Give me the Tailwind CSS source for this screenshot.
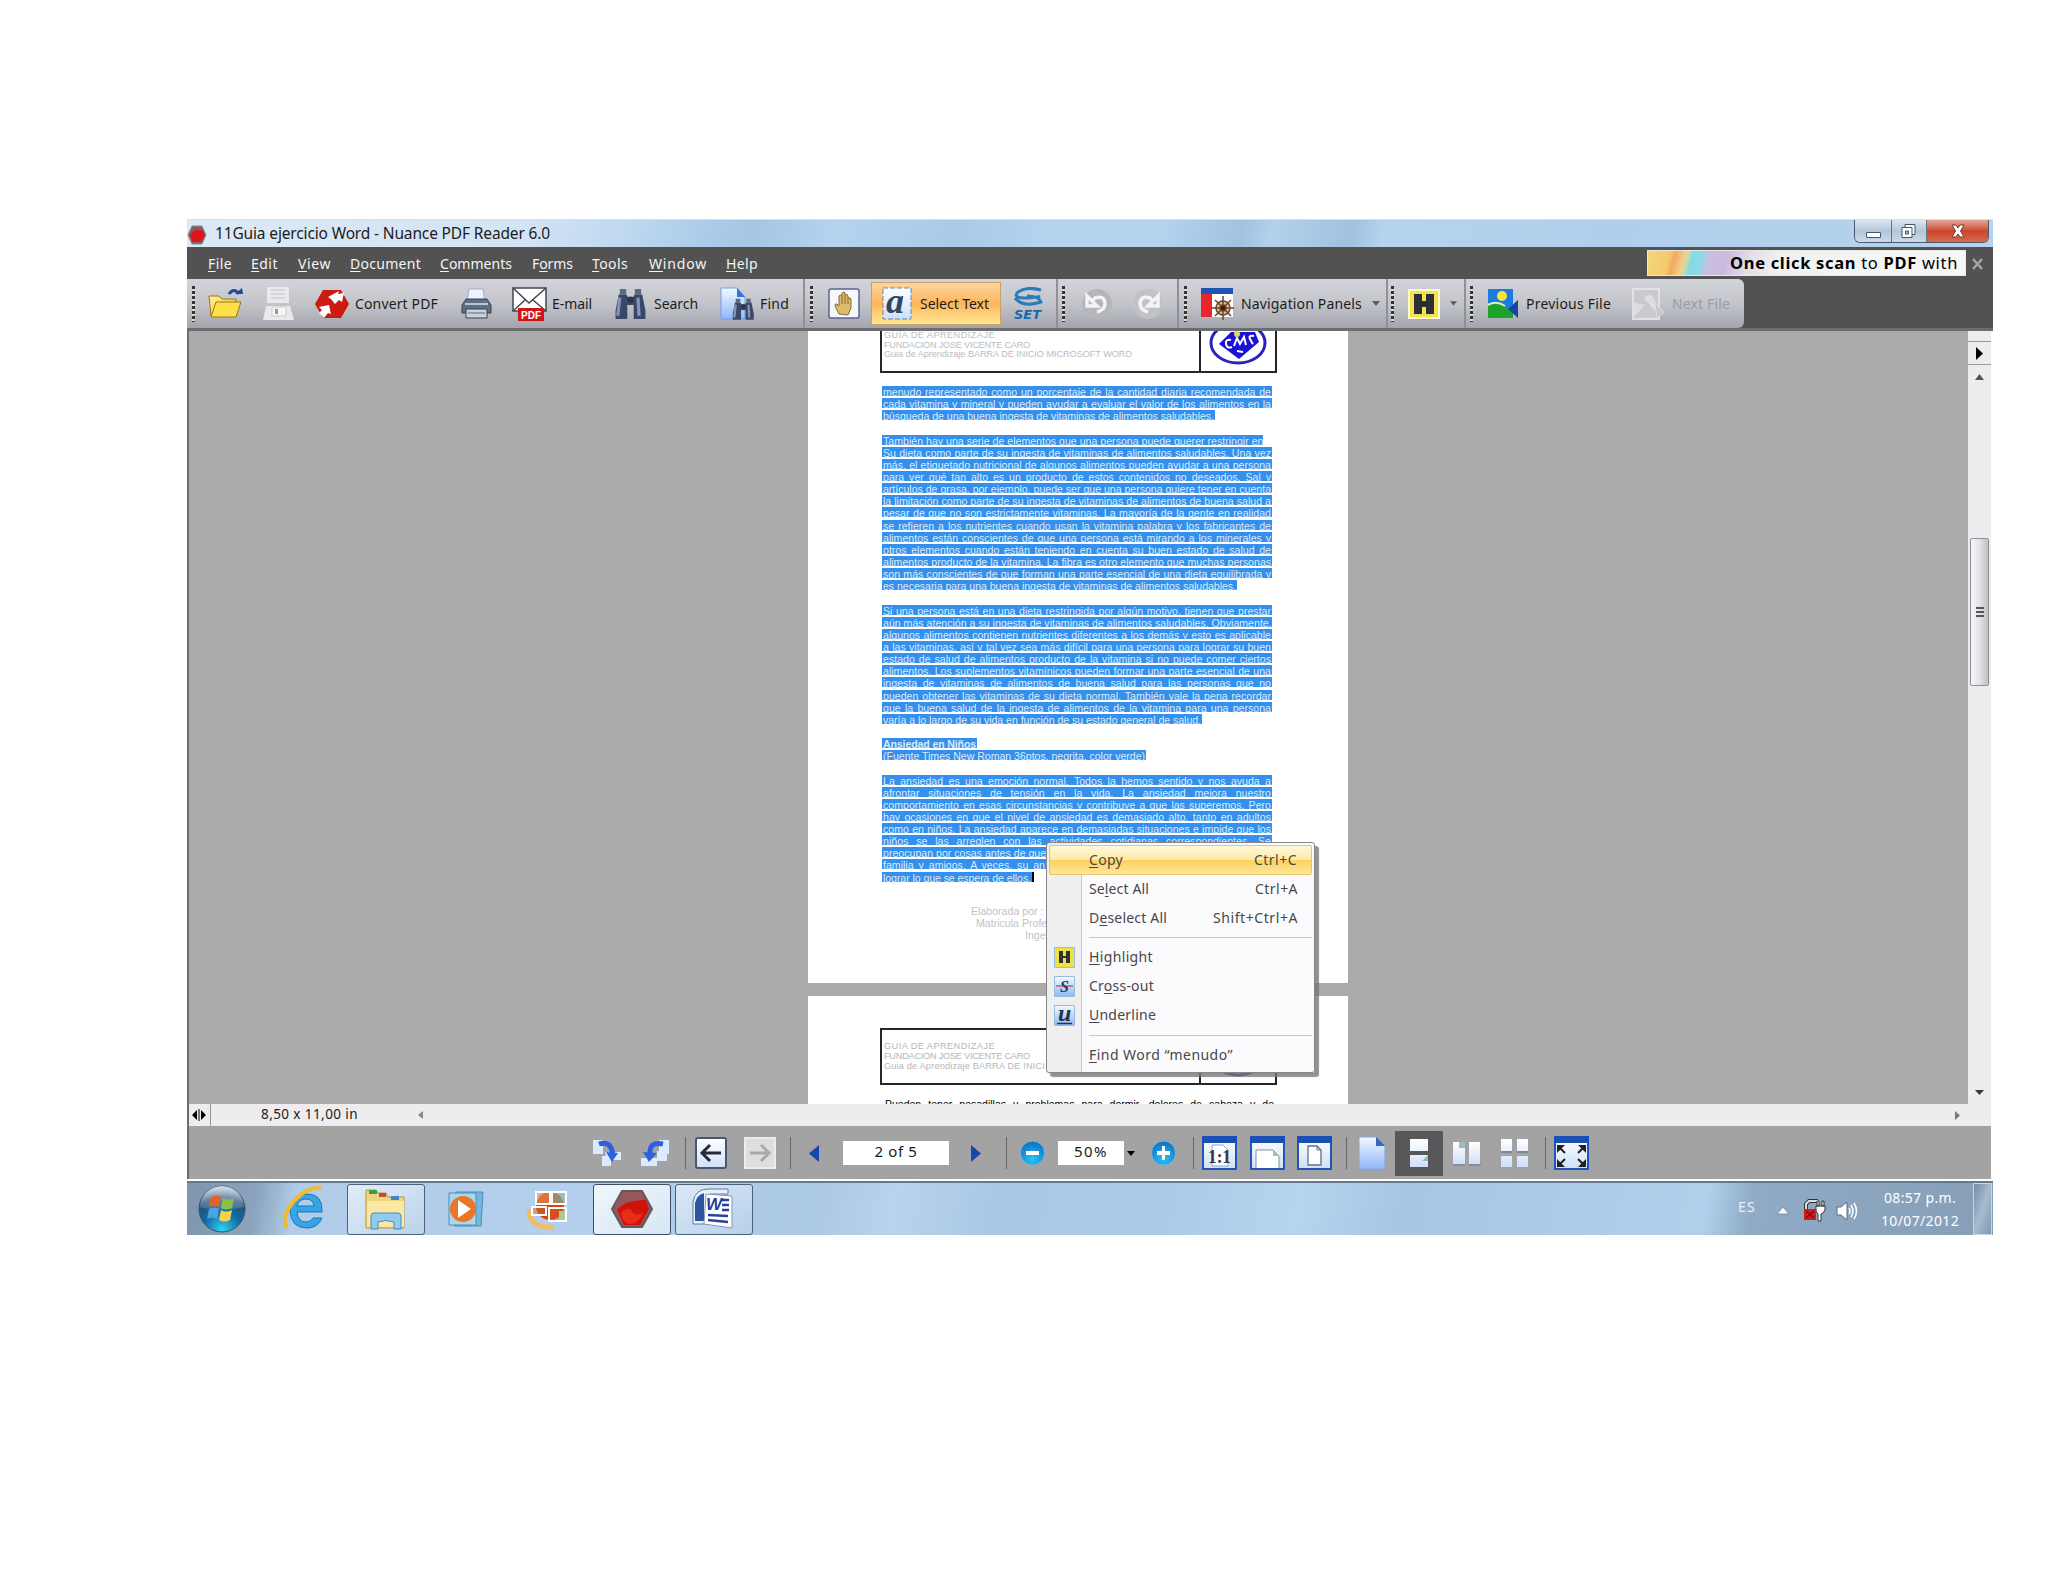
<!DOCTYPE html>
<html lang="es">
<head>
<meta charset="utf-8">
<title>11Guia ejercicio Word - Nuance PDF Reader 6.0</title>
<script src="https://cdn.jsdelivr.net/npm/@tailwindcss/browser@4"></script>
</head>
<body class="h-[1582px] w-[2048px] overflow-hidden bg-white pl-[187px] pt-[219px] font-['Noto_Sans','Open_Sans',sans-serif] text-[15px] text-[#1c1c20]">
<svg width="0" height="0" class="absolute">
  <defs>
    <linearGradient id="blue" x1="0" y1="0" x2="0" y2="1"><stop offset="0" stop-color="#f4f9ff"/><stop offset="1" stop-color="#8fb8f8"/></linearGradient>
    <linearGradient id="pane" x1="0" y1="0" x2="0" y2="1"><stop offset="0" stop-color="#ffffff"/><stop offset="1" stop-color="#cfe0f8"/></linearGradient>
    <radialGradient id="ball" cx=".5" cy=".75" r=".65"><stop offset="0" stop-color="#27c4f8"/><stop offset="1" stop-color="#1478c4"/></radialGradient>
    <linearGradient id="fold" x1="0" y1="0" x2="1" y2="1"><stop offset="0" stop-color="#fff3a0"/><stop offset="1" stop-color="#f0b90e"/></linearGradient>
    <radialGradient id="orb" cx=".5" cy=".95" r=".9"><stop offset="0" stop-color="#2fd4f4"/><stop offset=".45" stop-color="#0f6ba4"/><stop offset=".8" stop-color="#285070"/><stop offset="1" stop-color="#93b0c8"/></radialGradient>
    <linearGradient id="orbtop" x1="0" y1="0" x2="0" y2="1"><stop offset="0" stop-color="#dfe9f2" stop-opacity=".8"/><stop offset="1" stop-color="#7f9db8" stop-opacity=".3"/></linearGradient>
    <g id="bino"><path d="M5 1h6v5H5zM19 1h6v5h-6z" fill="#5a6a88"/><path d="M4 6h7l3 4h2l3-4h7l3 15v8H18V16h-6v13H1v-8z" fill="#3a4868"/><path d="M5 9l-2 17M22 9l1 17" stroke="#8795b4" stroke-width="3" fill="none"/><circle cx="15" cy="11" r="3" fill="#2a3450"/></g>
  </defs>
</svg>

<main class="flex h-[1016px] w-[1806px] flex-col">
  <!-- title bar -->
  <header class="flex h-[28px] shrink-0 border-t border-[#d5e3ef] bg-[linear-gradient(100deg,#dce9f6_0px,#d3e4f5_330px,#bfd9f0_430px,#a9cbe9_520px,#a5c7e3_560px,#b3d3ef_640px,#a9cbe7_760px,#b3d3ef_850px,#b3d3ef_960px,#a1c3df_1040px,#b1d1ec_1070px,#a1c2de_1150px,#b3d3ee_1180px,#b0cfec_1400px,#b7d3ec_1806px)]">
    <svg class="mt-[5px] shrink-0" width="20" height="20" viewBox="0 0 20 20"><path d="M5 1h10l4 9-4 9H5l-4-9z" fill="#7c6264" stroke="#8a8a90"/><path d="M4 8q6-6 12-2l2 4-4 7H6l-3-6z" fill="#e0141a"/></svg>
    <span class="ml-[8px] w-[335px] whitespace-nowrap text-[15.500px] leading-[27px]" data-fit="335">11Guia ejercicio Word - Nuance PDF Reader 6.0</span>
    <div class="ml-auto mr-1 flex h-[23px] overflow-hidden rounded-b-md border border-t-0 border-[#4c5a6c]">
      <div class="flex w-[37px] items-center justify-center border-r border-[#65758a] bg-linear-to-b from-[#dce7f1] via-[#b3c5d8] to-[#c8dbec]"><i class="mt-[7px] h-[6px] w-[15px] rounded-[1px] border border-[#44546a] bg-white"></i></div>
      <div class="flex w-[35px] items-center justify-center border-r border-[#65758a] bg-linear-to-b from-[#dce7f1] via-[#b3c5d8] to-[#c8dbec]"><svg class="mr-[2px]" width="17" height="17" viewBox="0 0 17 17" fill="#fff" stroke="#44546a"><path d="M5 1.500h10v10H5z"/><path d="M2 4.500h10v10H2z"/><path d="M5.500 8h3v3h-3z" fill="#a9bace"/></svg></div>
      <div class="flex w-[61px] items-center justify-center bg-linear-to-b from-[#e2a79b] via-[#c9452c] to-[#d9694a]"><svg width="16" height="14" viewBox="0 0 16 14"><path d="M2 1h4l2 3 2-3h4l-3.500 6 3.500 6h-4l-2-3-2 3H2l3.500-6z" fill="#fff" stroke="#6a3a38"/></svg></div>
    </div>
  </header>

  <!-- menu bar -->
  <nav class="flex h-[32px] shrink-0 items-center bg-[#525253] pl-[21px] text-[14px] text-[#f4f4f4] [&>span]:shrink-0 [&>span]:whitespace-nowrap [&_u]:underline-offset-2">
    <span class="mr-[19px] w-[24px]" data-fit="24"><u>F</u>ile</span>
    <span class="mr-[20px] w-[27px]" data-fit="27"><u>E</u>dit</span>
    <span class="mr-[19px] w-[33px]" data-fit="33"><u>V</u>iew</span>
    <span class="mr-[19px] w-[71px]" data-fit="71"><u>D</u>ocument</span>
    <span class="mr-[20px] w-[72px]" data-fit="72"><u>C</u>omments</span>
    <span class="mr-[19px] w-[41px]" data-fit="41">F<u>o</u>rms</span>
    <span class="mr-[21px] w-[36px]" data-fit="36"><u>T</u>ools</span>
    <span class="mr-[19px] w-[58px]" data-fit="58"><u>W</u>indow</span>
    <span class="w-[32px]" data-fit="32"><u>H</u>elp</span>
    <div class="ml-auto flex h-[26px] w-[319px] items-center justify-end border border-[#e8e8e8] bg-[linear-gradient(105deg,#f3d77a_0px,#f5c96c_22px,#f3a860_27px,#f0d08a_36px,#c8d8b0_41px,#7edce8_44px,#8fd9e8_54px,#c9c0de_60px,#cdb9e0_78px,#e4dde8_100px,#f1f1f1_130px,#f7f7f7_319px)] pr-[7px] text-black">
      <span class="w-[228px] whitespace-nowrap text-[16.500px] leading-[24px]" data-fit="228"><b>One click scan</b> to <b>PDF</b> with</span>
    </div>
    <svg class="ml-[5px] mr-[9px] shrink-0" width="13" height="13" viewBox="0 0 13 13"><path d="M2 2l9 10M11 2L2 12" stroke="#a4a4a4" stroke-width="2.600"/></svg>
  </nav>

  <!-- toolbar -->
  <div class="flex h-[52px] shrink-0 border-b-[3px] border-[#6c6d70] bg-[#525253]">
    <div class="flex h-[49px] w-[1557px] items-center rounded-r-md bg-linear-to-b from-[#d3d4d9] via-[#c4c5cb] to-[#a3a5ae] text-[14px] [&>*]:shrink-0 [&>span]:whitespace-nowrap">
      <i class="ml-[5px] mr-[13px] h-[36px] w-[3px] bg-[repeating-linear-gradient(to_bottom,#333_0_3px,#ddd_3px_5px)]"></i>
      <svg class="mr-[20px]" width="35" height="31" viewBox="0 0 35 31"><path d="M1 8h10l3 3h14v17H3z" fill="url(#fold)" stroke="#9c7612"/><path d="M8 14h25l-5 15H3z" fill="#ffe04a" stroke="#9c7612"/><path d="M21 6q5-7 10 0" fill="none" stroke="#1b4c94" stroke-width="3"/><path d="M27 6h8l-1-6z" fill="#1b4c94"/></svg>
      <svg class="mr-[20px]" width="32" height="35" viewBox="0 0 32 35"><path d="M4 1h22v16H4zM3 20h24l4 14H0z" fill="#e9e9eb"/><path d="M8 4h14M8 8h14M8 12h14" stroke="#d6d6da" stroke-width="2"/><path d="M9 21h14v9H9z" fill="#f6f6f6" stroke="#cdcdd2"/><path d="M12 23h3v5h-3z" fill="#999"/></svg>
      <svg class="mr-[5px]" width="35" height="30" viewBox="0 0 35 30"><path d="M8 1h18l8 14-8 14H8L0 15z" fill="#cc1b10"/><path d="M13 8l11-6-1 3 6-1-2 9-3-2-4 4-4-5z" fill="#fff"/><path d="M4 18l10-2 2 9-3-1-4 5-5-5 3-3z" fill="#fff"/></svg>
      <span class="mr-[23px] w-[83px]" data-fit="83">Convert PDF</span>
      <svg class="mr-[20px]" width="31" height="32" viewBox="0 0 31 32"><path d="M8 1h14l2 13H6z" fill="#eef4ff" stroke="#9db1cf"/><path d="M5 11h21l4 6v8H1v-8z" fill="#5e6f82" stroke="#36434f"/><path d="M4 16h23" stroke="#b9c6d2" stroke-width="2"/><path d="M5 21h21v9H5z" fill="#c8d2dc" stroke="#36434f"/><path d="M7 25h17" stroke="#667" /></svg>
      <svg class="mr-[5px]" width="35" height="36" viewBox="0 0 35 36"><path d="M1 2h33v23H1z" fill="#fff" stroke="#45474d" stroke-width="1.500"/><path d="M1 2l16 15L34 2M1 25l12-11M34 25L21 14" fill="none" stroke="#45474d" stroke-width="1.500"/><path d="M6 22h26v13H6z" fill="#d0141a"/><text x="9" y="33" font-size="11.500" font-weight="700" fill="#fff" font-family="Liberation Sans" textLength="20" lengthAdjust="spacingAndGlyphs">PDF</text></svg>
      <span class="mr-[22px] w-[40px]" data-fit="40">E-mail</span>
      <svg class="mr-[7px]" width="33" height="32" viewBox="0 0 30 30"><use href="#bino"/></svg>
      <span class="mr-[22px] w-[44px]" data-fit="44">Search</span>
      <svg class="mr-[5px]" width="35" height="34" viewBox="0 0 35 34"><path d="M1 1h16l8 9v22H1z" fill="url(#blue)" stroke="#6f9de8"/><path d="M17 1v9h8z" fill="#3373e0"/><g transform="translate(12 11) scale(.75)"><use href="#bino"/></g></svg>
      <span class="mr-[13px] w-[30px]" data-fit="29">Find</span>
      <i class="h-[49px] w-[2px] bg-[#8f9097]"></i>
      <i class="ml-[5px] mr-[15px] h-[36px] w-[3px] bg-[repeating-linear-gradient(to_bottom,#333_0_3px,#ddd_3px_5px)]"></i>
      <svg class="mr-[11px]" width="32" height="31" viewBox="0 0 32 31"><rect x="1" y="1" width="30" height="29" rx="2" fill="#f7f8fc" stroke="#56648f" stroke-width="1.500"/><path d="M11 26l-4-8q0-3 2-2l2 2V8q1-2 3 0V5q2-2 3 0v2q2-2 3 1v2q3-1 3 2v8l-3 7z" fill="#dcbc6c" stroke="#856a2e"/><path d="M14 8v8M17 7v9M20 9v7" stroke="#856a2e"/></svg>
      <div class="flex h-[43px] w-[130px] items-center border border-[#c9a25e] bg-linear-to-b from-[#fbd5a0] via-[#fdb65a] to-[#fee893] pl-[10px]">
        <svg class="mr-[8px] shrink-0" width="30" height="33" viewBox="0 0 30 33"><rect x="1" y="1" width="28" height="31" fill="url(#pane)" stroke="#6787ae" stroke-dasharray="5 2"/><text x="4" y="26" font-size="36" font-style="italic" font-weight="700" font-family="Liberation Serif" fill="#2b4a66">a</text></svg>
        <span class="w-[69px] whitespace-nowrap" data-fit="69">Select Text</span>
      </div>
      <svg class="ml-[11px] mr-[13px]" width="31" height="33" viewBox="0 0 31 33"><path d="M29 3Q15-1 6 5q-6 6 8 6 10 0 14-2M3 11q8 10 26 4-2-6-14-6" fill="none" stroke="#2a7cb8" stroke-width="3"/><text x="2" y="32" font-size="13" font-weight="700" font-style="italic" font-family="DejaVu Sans" fill="#1668ac" textLength="27" lengthAdjust="spacingAndGlyphs">SET</text></svg>
      <i class="h-[49px] w-[2px] bg-[#8f9097]"></i>
      <i class="ml-[4px] mr-[16px] h-[36px] w-[3px] bg-[repeating-linear-gradient(to_bottom,#333_0_3px,#ddd_3px_5px)]"></i>
      <svg class="mr-[19px]" width="32" height="32" viewBox="0 0 32 32"><circle cx="16" cy="16" r="15" fill="#b5b6ba"/><path d="M6 8v10h10zM10 14l4-4q9-3 10 5 0 7-8 9" fill="none" stroke="#f4f4f5" stroke-width="3.500"/></svg>
      <svg class="mr-[13px]" width="32" height="32" viewBox="0 0 32 32"><circle cx="16" cy="16" r="15" fill="#c1c2c5"/><path d="M26 8v10H16zM22 14l-4-4q-9-3-10 5 0 7 8 9" fill="none" stroke="#f4f4f5" stroke-width="3.500"/></svg>
      <i class="h-[49px] w-[2px] bg-[#8f9097]"></i>
      <i class="ml-[5px] mr-[14px] h-[36px] w-[3px] bg-[repeating-linear-gradient(to_bottom,#333_0_3px,#ddd_3px_5px)]"></i>
      <svg class="mr-[7px]" width="33" height="33" viewBox="0 0 33 33"><path d="M0 1h32v29H0z" fill="#fff"/><path d="M0 1h32v6H0z" fill="#1d55b4"/><path d="M0 7h11v23H0z" fill="#e8262a"/><g stroke="#6a4528" stroke-width="1.500" fill="#e5bc94"><circle cx="22" cy="21" r="7"/><path d="M22 9v24M10 21h23M14 13l16 16M30 13L14 29"/><circle cx="22" cy="21" r="3" fill="#351c10"/></g></svg>
      <span class="mr-[10px] w-[121px]" data-fit="121">Navigation Panels</span>
      <svg class="mr-[6px]" width="8" height="5" viewBox="0 0 8 5"><path d="M0 0h8L4 5z" fill="#5a5c62"/></svg>
      <i class="h-[49px] w-[2px] bg-[#8f9097]"></i>
      <i class="ml-[3px] mr-[14px] h-[36px] w-[3px] bg-[repeating-linear-gradient(to_bottom,#333_0_3px,#ddd_3px_5px)]"></i>
      <svg class="mr-[10px]" width="32" height="30" viewBox="0 0 32 30"><rect x="1" y="1" width="30" height="28" fill="#f1e44e" stroke="#fbfbd0" stroke-width="2"/><path d="M6 5h8v7h4V5h8v20h-8v-7h-4v7H6z" fill="#2e2f36"/></svg>
      <svg class="mr-[7px]" width="7" height="5" viewBox="0 0 8 5"><path d="M0 0h8L4 5z" fill="#5a5c62"/></svg>
      <i class="h-[49px] w-[2px] bg-[#8f9097]"></i>
      <i class="ml-[4px] mr-[15px] h-[36px] w-[3px] bg-[repeating-linear-gradient(to_bottom,#333_0_3px,#ddd_3px_5px)]"></i>
      <svg class="mr-[8px]" width="30" height="31" viewBox="0 0 30 31"><path d="M0 1h25v29H0z" fill="#1b7ce0"/><circle cx="14" cy="8" r="5" fill="#ffe23c"/><path d="M0 17q10-6 25 8v5H0z" fill="#1ca32c"/><path d="M0 17q8-5 17 1" fill="none" stroke="#d5f3c8" stroke-width="2"/><path d="M30 12v18L20 21z" fill="#15469c"/></svg>
      <span class="mr-[21px] w-[85px]" data-fit="85">Previous File</span>
      <svg class="mr-[7px]" width="33" height="32" viewBox="0 0 33 32"><path d="M1 1h26v30H1z" fill="#c9cace" stroke="#e2e2e5" stroke-width="2"/><path d="M1 14l12 3-12 13M12 10q6-8 11 3v10z" fill="#dedee1"/><path d="M23 15l9 9-7 7z" fill="#c9cace" stroke="#dcdcdf"/></svg>
      <span class="w-[58px] text-[#9a9ba3]" data-fit="58">Next File</span>
    </div>
  </div>

  <!-- document viewport -->
  <section class="flex h-[773px] w-[1804px] shrink-0 border-l-2 border-[#6d6d70] bg-[#aba9ab]">
    <div class="relative h-[773px] w-[1779px] overflow-hidden pl-[619px] font-['Liberation_Sans',Arial,sans-serif]">
      <article class="relative h-[652px] w-[540px] bg-white">
        <div class="ml-[72px] flex h-[42px] w-[397px] border-2 border-t-0 border-[#25252b]">
          <div class="w-[319px] border-r-2 border-[#25252b] pl-[2px] text-[9.200px] leading-[9.700px] whitespace-nowrap text-[#bcbcc2]">
            <div class="w-[111px]" data-fit="111">GUIA DE APRENDIZAJE</div><div class="w-[146px]" data-fit="146">FUNDACION JOSE VICENTE CARO</div><div class="w-[248px]" data-fit="248">Guia de Aprendizaje BARRA DE INICIO MICROSOFT WORD</div>
          </div>
          <svg class="ml-[8px]" width="60" height="34" viewBox="0 0 60 34"><ellipse cx="29" cy="12" rx="27" ry="20" fill="#fff" stroke="#2d22b8" stroke-width="3"/><path d="M10 13L22 1h24l4 10-20 17z" fill="#1b12d8"/><path d="M22 9q-6-1-5 4t6 3M25 15l3-8 3 6 4-7 2 8M45 5q-6-1-4 3t3 5M28 20l6 1" stroke="#fff" stroke-width="2" fill="none"/><circle cx="28" cy="3" r="3" fill="#d9dc58"/></svg>
        </div>
        <div id="body-text" class="mt-[13px] ml-[74px] w-[391px] text-[10.600px]"></div>
        <div class="mt-[21px] ml-[163px] text-[10.600px] leading-[12.150px] whitespace-nowrap text-[#c2c2c8]">
          <div>Elaborada por :</div><div class="ml-[5px]">Matricula Profe</div><div class="ml-[54px]">Inge</div>
        </div>
      </article>
      <article class="mt-[13px] h-[120px] w-[540px] overflow-hidden bg-white pt-[32px]">
        <div class="ml-[72px] flex h-[57px] w-[397px] border-2 border-[#25252b]">
          <div class="w-[319px] border-r-2 border-[#25252b] pt-[12px] pl-[2px] text-[9.200px] leading-[9.900px] whitespace-nowrap text-[#b6b6bc]">
            <div class="w-[111px]" data-fit="111">GUIA DE APRENDIZAJE</div><div class="w-[146px]" data-fit="146">FUNDACION JOSE VICENTE CARO</div><div class="w-[161px]" data-fit="161">Guia de Aprendizaje BARRA DE INICI</div>
          </div>
          <svg class="ml-[8px]" width="60" height="52" viewBox="0 0 60 52"><ellipse cx="29" cy="25" rx="27" ry="20" fill="#fff" stroke="#2d22b8" stroke-width="3"/></svg>
        </div>
        <div class="mt-[13px] ml-[77px] w-[389px] text-[10.500px] leading-[12px] text-black [text-align-last:justify]">Pueden tener pesadillas y problemas para dormir, dolores de cabeza y de</div>
      </article>

      <!-- context menu -->
      <div class="absolute top-[511px] left-[857px] w-[269px] h-[231px] rounded-[3px] border border-[#85868a] bg-[linear-gradient(to_right,#efefef_0_34px,#c9c9cb_34px_35px,#fbfafd_35px)] px-[2px] pt-[2px] font-['Noto_Sans',sans-serif] text-[14px] text-[#47474b] shadow-[4px_4px_1px_#77777bcc] [&>div]:flex [&>div]:items-center [&>div]:pr-[14px] [&_span]:mb-[2px] [&_span]:whitespace-nowrap [&_u]:underline-offset-2">
        <div class="h-[30px] rounded-[2px] border border-[#e8c66c] bg-[linear-gradient(to_bottom,#fff8dc_0%,#fee9a8_48%,#fdd25c_52%,#fee69c_100%)] pl-[39px]"><span class="w-[34px]" data-fit="34"><u>C</u>opy</span><span class="ml-auto w-[43px]" data-fit="43">Ctrl+C</span></div>
        <div class="h-[29px] pl-[40px]"><span class="w-[60px]" data-fit="60">Se<u>l</u>ect All</span><span class="ml-auto w-[43px]" data-fit="43">Ctrl+A</span></div>
        <div class="h-[29px] pl-[40px]"><span class="w-[78px]" data-fit="78">D<u>e</u>select All</span><span class="ml-auto w-[85px]" data-fit="85">Shift+Ctrl+A</span></div>
        <hr class="mt-[4px] ml-[40px] border-[#c6c6ca]">
        <div class="mt-[5px] h-[29px] pl-[5px]"><svg class="mr-[14px]" width="21" height="21" viewBox="0 0 21 21"><path d="M.5.500h20v20H.5z" fill="#eee04c" stroke="#98bce0"/><path d="M5 4h4v5h3V4h4v12h-4v-5H9v5H5z" fill="#30332c"/></svg><span class="w-[64px]" data-fit="64"><u>H</u>ighlight</span></div>
        <div class="h-[29px] pl-[5px]"><svg class="mr-[14px]" width="21" height="21" viewBox="0 0 21 21"><path d="M.5.500h20v20H.5z" fill="url(#blue)" stroke="#98bce0"/><text x="6" y="16" font-size="16" font-style="italic" font-weight="700" font-family="Liberation Serif" fill="#27344c">S</text><path d="M2 10h17" stroke="#a84458" stroke-width="1.200"/></svg><span class="w-[65px]" data-fit="65">Cr<u>o</u>ss-out</span></div>
        <div class="h-[29px] pl-[5px]"><svg class="mr-[14px]" width="21" height="21" viewBox="0 0 21 21"><path d="M.5.500h20v20H.5z" fill="url(#blue)" stroke="#98bce0"/><text x="4" y="16" font-size="24" font-style="italic" font-weight="700" font-family="Liberation Serif" fill="#27344c">u</text><path d="M3 18.500h15" stroke="#27344c" stroke-width="1.500"/></svg><span class="w-[67px]" data-fit="67"><u>U</u>nderline</span></div>
        <hr class="mt-[5px] ml-[40px] border-[#c6c6ca]">
        <div class="mt-[5px] h-[29px] pl-[40px]"><span class="w-[144px]" data-fit="144"><u>F</u>ind Word “menudo”</span></div>
      </div>
    </div>

    <!-- vertical scroll bar -->
    <aside class="flex h-[773px] w-[23px] flex-col items-center bg-[#eeecef]">
      <div class="h-[11px] w-full border-b border-[#9a9a9c]"></div>
      <div class="flex h-[23px] w-full items-center justify-center border-b border-[#9a9a9c]"><svg width="8" height="13" viewBox="0 0 8 13"><path d="M0 0l7 6.500L0 13z" fill="#000"/></svg></div>
      <svg class="mt-[9px]" width="9" height="6" viewBox="0 0 9 6"><path d="M0 6h9L4.500 0z" fill="#555"/></svg>
      <div class="mt-[158px] flex h-[148px] w-[19px] flex-col items-center justify-center gap-[2px] rounded-[2px] border border-[#8e8e92] bg-linear-to-r from-[#f6f6f8] via-[#e4e4e8] to-[#bfc0c6]"><i class="h-[2px] w-[8px] bg-[#55565a]"></i><i class="h-[2px] w-[8px] bg-[#55565a]"></i><i class="h-[2px] w-[8px] bg-[#55565a]"></i></div>
      <svg class="mt-auto mb-[9px]" width="9" height="5" viewBox="0 0 9 5"><path d="M0 0h9L4.500 5z" fill="#3a3a3a"/></svg>
    </aside>
  </section>

  <!-- page size and horizontal scroll -->
  <div class="flex h-[22px] w-[1804px] shrink-0 items-center border-l-2 border-[#6d6d70] bg-[#eeecef]">
    <div class="flex h-[22px] w-[22px] items-center justify-center border-r border-[#999]"><svg class="mr-[2px]" width="14" height="12" viewBox="0 0 14 12"><path d="M5 1v10L0 6zM9 1v10l5-5zM6.500 0h1v12h-1z" fill="#000"/></svg></div>
    <span class="mb-[2px] ml-[50px] w-[97px] whitespace-nowrap text-[13.500px] leading-[20px]" data-fit="97">8,50 x 11,00 in</span>
    <svg class="ml-[60px]" width="5" height="8" viewBox="0 0 5 8"><path d="M5 0v8L0 4z" fill="#888"/></svg>
    <svg class="mr-[31px] ml-auto" width="5" height="9" viewBox="0 0 5 9"><path d="M0 0v9l5-4.500z" fill="#777"/></svg>
  </div>

  <!-- navigation bar -->
  <div class="flex h-[53px] w-[1804px] shrink-0 items-center border-l-2 border-[#6d6d70] bg-[#a4a3a4] pt-px pl-[404px] [&>*]:shrink-0">
    <svg class="mr-[20px]" width="28" height="28" viewBox="0 0 28 28"><path d="M0 1h10v14H0zM9 17h9v10H9zM12 13h16v8H14z" fill="#dce9ff"/><path d="M6 5q12-4 14 11" fill="none" stroke="#2e5fdc" stroke-width="5"/><path d="M13 13l12 1-6 9z" fill="#2e5fdc"/></svg>
    <svg class="mr-[16px]" width="28" height="28" viewBox="0 0 28 28"><path d="M18 1h10v14H18zM0 19h16v8H0zM16 12h10v10H16z" fill="#dce9ff"/><path d="M22 5Q8 2 9 15" fill="none" stroke="#2e5fdc" stroke-width="5"/><path d="M2 13l14 1-8 9z" fill="#2e5fdc"/></svg>
    <i class="mr-[9px] h-[32px] w-px bg-[#66666a]"></i>
    <svg class="mr-[17px]" width="32" height="32" viewBox="0 0 32 32"><rect x="1" y="1" width="30" height="30" rx="2" fill="url(#pane)" stroke="#4c5674" stroke-width="2"/><path d="M26 16H8M15 8l-8 8 8 8" fill="none" stroke="#232c3c" stroke-width="3"/></svg>
    <svg class="mr-[14px]" width="32" height="32" viewBox="0 0 32 32"><rect x="1" y="1" width="30" height="30" fill="#dededf" stroke="#ececec" stroke-width="2"/><path d="M6 16h18M17 8l8 8-8 8" fill="none" stroke="#a9a9ab" stroke-width="3"/></svg>
    <i class="mr-[18px] h-[32px] w-px bg-[#66666a]"></i>
    <svg class="mr-[24px]" width="10" height="17" viewBox="0 0 10 17"><path d="M10 0v17L0 8.500z" fill="#1647b0"/></svg>
    <div class="mr-[22px] flex h-[24px] w-[106px] items-center justify-center bg-white"><span class="mb-[3px] w-[43px] whitespace-nowrap" data-fit="43">2 of 5</span></div>
    <svg class="mr-[25px]" width="10" height="17" viewBox="0 0 10 17"><path d="M0 0v17l10-8.500z" fill="#1647b0"/></svg>
    <i class="mr-[13px] h-[32px] w-px bg-[#66666a]"></i>
    <svg class="mr-[13px]" width="25" height="26" viewBox="0 0 25 26"><circle cx="12.500" cy="13" r="12" fill="url(#ball)" stroke="#6db4e4"/><path d="M6 11h13v4H6z" fill="#fff"/></svg>
    <div class="mr-[3px] flex h-[24px] w-[66px] items-center justify-center bg-white"><span class="mb-[3px] w-[34px] whitespace-nowrap" data-fit="34">50%</span></div>
    <svg class="mr-[16px]" width="8" height="5" viewBox="0 0 8 5"><path d="M0 0h8L4 5z" fill="#000"/></svg>
    <svg class="mr-[17px]" width="25" height="26" viewBox="0 0 25 26"><circle cx="12.500" cy="13" r="12" fill="url(#ball)" stroke="#6db4e4"/><path d="M6 11h5V6h3v5h5v4h-5v5h-3v-5H6z" fill="#fff"/></svg>
    <i class="mr-[8px] h-[32px] w-px bg-[#66666a]"></i>
    <svg class="mr-[13px]" width="35" height="34" viewBox="0 0 35 34"><path d="M1 1h33v32H1z" fill="url(#pane)" stroke="#1f55b8" stroke-width="2"/><path d="M0 0h35v7H0z" fill="#1a50b4"/><path d="M10 9h11l5 5v16H10z" fill="#fff" stroke="#8fa9d0"/><text x="6" y="27" font-size="19" font-weight="700" font-family="Liberation Serif" fill="#3c3444" textLength="23" lengthAdjust="spacingAndGlyphs">1:1</text></svg>
    <svg class="mr-[12px]" width="35" height="34" viewBox="0 0 35 34"><path d="M1 1h33v32H1z" fill="url(#pane)" stroke="#1f55b8" stroke-width="2"/><path d="M0 0h35v7H0z" fill="#1a50b4"/><path d="M6 32V14h17l6 6v12" fill="#fff" stroke="#7c93a8"/><path d="M23 14v6h6z" fill="#9fc79f"/></svg>
    <svg class="mr-[14px]" width="35" height="34" viewBox="0 0 35 34"><path d="M1 1h33v32H1z" fill="url(#pane)" stroke="#1f55b8" stroke-width="2"/><path d="M0 0h35v7H0z" fill="#1a50b4"/><path d="M11 10h9l4 4v15H11z" fill="#fff" stroke="#5d7388" stroke-width="1.300"/><path d="M20 10v4h4" fill="none" stroke="#5d7388"/></svg>
    <i class="mr-[12px] h-[32px] w-px bg-[#66666a]"></i>
    <svg class="mr-[10px]" width="26" height="34" viewBox="0 0 26 34"><path d="M0 1h17l9 9v23H0z" fill="url(#blue)" stroke="#7fa4e4"/><path d="M17 1v9h9z" fill="#2f66cc"/></svg>
    <div class="mr-[10px] flex h-[45px] w-[48px] items-center justify-center bg-[#58585a]"><svg width="18" height="28" viewBox="0 0 18 28"><path d="M0 0h18v12H0zM0 16h18v12H0z" fill="url(#pane)"/><path d="M18 16v6h-6z" fill="#8fc0a8"/></svg></div>
    <svg class="mr-[20px]" width="28" height="26" viewBox="0 0 28 26"><path d="M0 2h12v22H0zM16 2h11v22H16z" fill="url(#pane)"/><path d="M0 25h12M16 25h12" stroke="#687898"/><path d="M6 2v6h6V2z" fill="#9dbfb4"/></svg>
    <svg class="mr-[17px]" width="27" height="28" viewBox="0 0 27 28"><path d="M0 0h11v12H0zM16 0h11v12H16zM0 17h11v11H0zM16 17h11v11H16z" fill="url(#pane)"/><path d="M0 13h11M16 13h11" stroke="#54688c"/></svg>
    <i class="mr-[8px] h-[32px] w-px bg-[#66666a]"></i>
    <svg width="35" height="34" viewBox="0 0 35 34"><path d="M1 1h33v32H1z" fill="url(#pane)" stroke="#1f55b8" stroke-width="2"/><path d="M0 0h35v7H0z" fill="#1a50b4"/><path d="M3 9h8l-8 8zM32 9h-8l8 8zM3 31h8l-8-8zM32 31h-8l8-8z" fill="#222"/><path d="M5 11l6 6M30 11l-6 6M5 29l6-6M30 29l-6-6" stroke="#222" stroke-width="2"/></svg>
  </div>

  <!-- taskbar -->
  <footer class="mt-[2px] flex h-[54px] shrink-0 items-center border-t-2 border-[#66788c] bg-[linear-gradient(100deg,#7f95ae_0px,#8ba3bd_70px,#b0cce8_110px,#b4d0ee_400px,#abc8e4_620px,#b9d3ec_700px,#a9c8e6_800px,#a9cbe8_960px,#b6d4ef_1100px,#a6c6e4_1200px,#b0d0ec_1500px,#8fabc6_1545px,#869db5_1800px)] [&>*]:shrink-0">
    <svg class="ml-[11px]" width="48" height="48" viewBox="0 0 48 48"><circle cx="24" cy="24" r="23" fill="url(#orb)" stroke="#3a5068"/><path d="M2 22a22 21 0 0 1 44 0q-22 6-44 0z" fill="url(#orbtop)"/><path d="M13 12q5-3 10 0l-2 10q-5-3-10 0z" fill="#e8602c"/><path d="M25 13q5 3 11 0l-2 10q-5 3-11 0z" fill="#8cc048"/><path d="M11 24q5-3 10 0l-2 10q-5-3-10 0z" fill="#4ea4e0"/><path d="M23 25q5 3 11 0l-2 10q-5 3-11 0z" fill="#fad048"/></svg>
    <svg class="mb-[2px] ml-[37px] mr-[22px]" width="42" height="46" viewBox="0 0 42 46"><path d="M14 27h25q1-18-15-18T7 26q1 17 17 17 11 0 15-10h-9q-2 4-7 4-8 0-9-10zm0-6q2-7 9-7t8 7z" fill="#38a4e4" stroke="#1b78be" fill-rule="evenodd"/><path d="M4 43Q-3 34 10 17 24 1 38 3" fill="none" stroke="#f0bb30" stroke-width="4"/></svg>
    <div class="flex h-[51px] w-[78px] items-center justify-center rounded-[3px] border border-[#4c617a] bg-linear-to-br from-[#e2edf8] to-[#b9d2ea]"><svg width="44" height="42" viewBox="0 0 44 42"><path d="M2 2h10l2 3h8l2 4h16v31H2z" fill="#efd57c" stroke="#b7983c"/><path d="M3 13h37v26H3z" fill="#f9e9a4"/><path d="M5 2h8v4H5z" fill="#3d9c48"/><path d="M15 5h7v4h-7z" fill="#c34c40"/><path d="M27 8h8v4h-8z" fill="#3f83d0"/><path d="M7 41V28q0-3 3-3h24q3 0 3 3v13h-7v-7q-8-3-16 0v7z" fill="#93cbee" stroke="#418cc0"/></svg></div>
    <svg class="ml-[23px]" width="37" height="38" viewBox="0 0 37 38"><path d="M8 2h27l-2 34H6z" fill="#72b7dc" stroke="#4a8fb8"/><path d="M1 3h27v32H1z" fill="#a9d7ee" stroke="#4890b8"/><circle cx="15" cy="19" r="13" fill="#ec7526"/><path d="M10 10l13 9-13 9z" fill="#fff"/></svg>
    <svg class="ml-[42px] mr-[24px]" width="42" height="44" viewBox="0 0 42 44"><path d="M2 22q0 20 25 18" fill="none" stroke="#f2be5c" stroke-width="5"/><circle cx="23" cy="19" r="14" fill="#d0480f"/><path d="M25 5h14v12H25z" fill="#86b6a0" fill-opacity=".6" stroke="#fff" stroke-width="2"/><path d="M9 5h14v12H9z" fill="#f0a060" fill-opacity=".5" stroke="#fff" stroke-width="2"/><path d="M5 20h14v8H5zM22 21h17v13H22z" fill="#d8602c" fill-opacity=".4" stroke="#fff" stroke-width="2"/><path d="M32 24h6v9h-6z" fill="#a8cf90"/></svg>
    <div class="flex h-[51px] w-[78px] items-center justify-center rounded-[3px] border border-[#3d4f66] bg-linear-to-br from-[#f0f6fb] to-[#d8e6f4]"><svg width="42" height="38" viewBox="0 0 42 38"><path d="M11 1h20l10 18-10 18H11L1 19z" fill="#96565a" stroke="#60585c" stroke-width="2"/><path d="M6 20q7-10 29-10l3 9-9 16H13z" fill="#d0120c"/><path d="M10 24q4-7 10-4 4 8 12 2-2 10-12 12-8 0-10-10z" fill="#e82c18"/></svg></div>
    <div class="ml-[4px] flex h-[51px] w-[78px] items-center justify-center rounded-[3px] border border-[#4c617a] bg-linear-to-br from-[#dce9f6] to-[#b5d0ea]"><svg class="mr-[2px]" width="42" height="42" viewBox="0 0 42 42"><path d="M1 36V14Q3 1 16 1h20v5H18v30z" fill="#e8f0fa" stroke="#5b7dae"/><path d="M3 33V15Q5 7 12 5v28z" fill="#2b559c"/><path d="M14 6l26 2v32l-28-4z" fill="#fff" stroke="#8797b4"/><text x="14" y="22" font-size="17" font-weight="700" font-style="italic" font-family="Liberation Sans" fill="#28429c" textLength="15">W</text><path d="M30 12h7M30 17h7M30 22h7M16 27l20 1M16 32l20 2" stroke="#28429c" stroke-width="2.500"/></svg></div>
    <span class="mb-[6px] ml-auto w-[18px] text-[14px] text-[#e8f0f8]" data-fit="18">ES</span>
    <svg class="mt-[4px] ml-[21px]" width="12" height="8" viewBox="0 0 12 8"><path d="M0 7h12L6 0z" fill="#f5f8fb" stroke="#55708c" stroke-width=".6"/></svg>
    <svg class="mt-[3px] ml-[14px]" width="23" height="24" viewBox="0 0 23 24"><path d="M3 20V5l3-3h9" fill="none" stroke="#333" stroke-width="4"/><path d="M3 20V5l3-3h9" fill="none" stroke="#ddd" stroke-width="2"/><path d="M13 7h9v4q-2 4-4 4v7h-3v-7q-2-2-2-4zM14 2h2v5h-2zM19 2h2v5h-2z" fill="#fff" stroke="#333"/><path d="M1 10h12v11H1z" fill="#d01c1c"/><path d="M3 12l8 7M11 12l-8 7" stroke="#7c0c10" stroke-width="1.500"/></svg>
    <svg class="mt-[3px] ml-[10px]" width="22" height="20" viewBox="0 0 22 20"><path d="M1 6h4l6-5v18l-6-5H1z" fill="#fff" stroke="#586c80"/><path d="M13 7q2 3 0 6M15 4q4 6 0 12M18 2q5 8 0 16" fill="none" stroke="#fff" stroke-width="1.500"/></svg>
    <div class="ml-[23px] flex w-[78px] flex-col items-center text-[14px] leading-[23px] whitespace-nowrap text-white"><span class="w-[72px]" data-fit="72">08:57 p.m.</span><span class="w-[78px]" data-fit="78">10/07/2012</span></div>
    <div class="ml-[14px] mr-px h-[52px] w-[19px] border border-[#c8d6e4] bg-linear-to-br from-[#748ca6] via-[#a8bccf] to-[#8199b2]"></div>
  </footer>
</main>

<script>
  // [text, width of the selection]; null leaves a blank line
  const lines = [
    ["menudo representado como un porcentaje de la cantidad diaria recomendada de",390],
    ["cada vitamina y mineral y pueden ayudar a evaluar el valor de los alimentos en la",390],
    ["búsqueda de una buena ingesta de vitaminas de alimentos saludables.",333],null,
    ["También hay una serie de elementos que una persona puede querer restringir en",381],
    ["Su dieta como parte de su ingesta de vitaminas de alimentos saludables. Una vez",390],
    ["más, el etiquetado nutricional de algunos alimentos pueden ayudar a una persona",390],
    ["para ver qué tan alto es un producto de estos contenidos no deseados. Sal y",390],
    ["artículos de grasa, por ejemplo, puede ser que una persona quiere tener en cuenta",390],
    ["la limitación como parte de su ingesta de vitaminas de alimentos de buena salud a",390],
    ["pesar de que no son estrictamente vitaminas. La mayoría de la gente en realidad",390],
    ["se refieren a los nutrientes cuando usan la vitamina palabra y los fabricantes de",390],
    ["alimentos están conscientes de que una persona está mirando a los minerales y",390],
    ["otros elementos cuando están teniendo en cuenta su buen estado de salud de",390],
    ["alimentos producto de la vitamina. La fibra es otro elemento que muchas personas",390],
    ["son más conscientes de que forman una parte esencial de una dieta equilibrada y",390],
    ["es necesaria para una buena ingesta de vitaminas de alimentos saludables.",355],null,
    ["Si una persona está en una dieta restringida por algún motivo, tienen que prestar",390],
    ["aún más atención a su ingesta de vitaminas de alimentos saludables. Obviamente,",390],
    ["algunos alimentos contienen nutrientes diferentes a los demás y esto es aplicable",390],
    ["a las vitaminas, así y tal vez sea más difícil para una persona para lograr su buen",390],
    ["estado de salud de alimentos producto de la vitamina si no puede comer ciertos",390],
    ["alimentos. Los suplementos vitamínicos pueden formar una parte esencial de una",390],
    ["ingesta de vitaminas de alimentos de buena salud para las personas que no",390],
    ["pueden obtener las vitaminas de su dieta normal. También vale la pena recordar",390],
    ["que la buena salud de la ingesta de alimentos de la vitamina para una persona",390],
    ["varía a lo largo de su vida en función de su estado general de salud.",320],null,
    ["<b>Ansiedad en Niños</b>",95],
    ["(Fuente Times New Roman 36ptos, negrita, color verde)",264],null,
    ["La ansiedad es una emoción normal. Todos la hemos sentido y nos ayuda a",390],
    ["afrontar situaciones de tensión en la vida. La ansiedad mejora nuestro",390],
    ["comportamiento en esas circunstancias y contribuye a que las superemos. Pero",390],
    ["hay ocasiones en que el nivel de ansiedad es demasiado alto, tanto en adultos",390],
    ["como en niños. La ansiedad aparece en demasiadas situaciones e impide que los",390],
    ["niños se las arreglen con las actividades cotidianas correspondientes. Se",390],
    ["preocupan por cosas antes de que",164],
    ["familia y amigos. A veces, su an",164],
    ["lograr lo que se espera de ellos.",152]
  ];
  document.getElementById('body-text').innerHTML = lines.map((l, i) => l
    ? `<div class="h-[12.15px]"><div class="h-[10px] bg-[#3490ec] px-[1px] whitespace-nowrap leading-[12.500px] text-[#d9ecfd] [text-align-last:justify] ${i === lines.length - 1 ? 'border-r-2 border-black' : ''}" style="width:${l[1]}px">${l[0]}</div></div>`
    : '<div class="h-[12.15px]"></div>').join('');

  // space labels out to their column width
  function spread(el, target) {
    el.style.letterSpacing = '0px';
    const r = document.createRange();
    r.selectNodeContents(el);
    const w = r.getBoundingClientRect().width;
    el.style.letterSpacing = ((target - w) / el.textContent.length) + 'px';
  }
  function fitAll() {
    if (getComputedStyle(document.body).paddingTop !== '219px') return;
    document.querySelectorAll('[data-fit]').forEach(el => spread(el, +el.dataset.fit));
    document.querySelectorAll('#body-text > div > div').forEach(el => {
      el.style.letterSpacing = '0px';
      if (el.scrollWidth > el.clientWidth) spread(el, el.clientWidth - 2);
    });
  }
  fitAll();
  addEventListener('load', () => { fitAll(); requestAnimationFrame(fitAll); setTimeout(fitAll, 60); });
  document.fonts.ready.then(fitAll);
</script>
</body>
</html>
